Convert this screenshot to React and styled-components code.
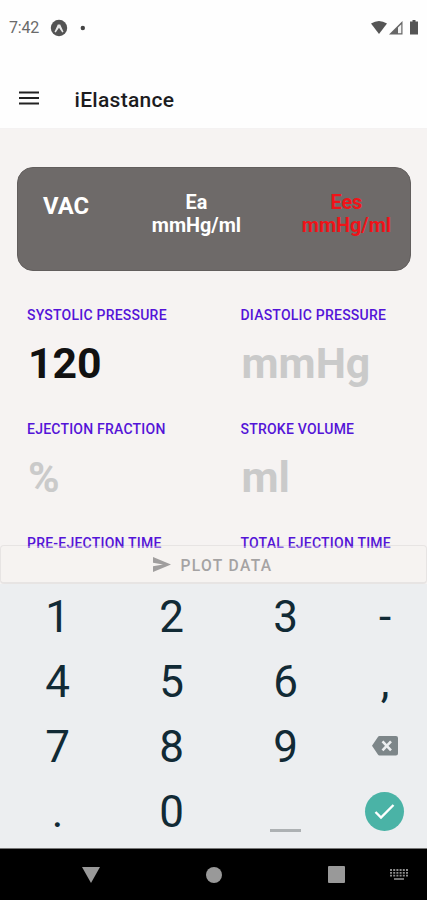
import React from 'react';
import styled, { createGlobalStyle } from 'styled-components';

const GlobalStyle = createGlobalStyle`
  * {
    box-sizing: border-box;
  }
  body {
    margin: 0;
    background: #f6f3f2;
    font-family: Roboto, "Liberation Sans", sans-serif;
  }
`;

const Screen = styled.div`
  display: flex;
  flex-direction: column;
  width: 427px;
  height: 900px;
  overflow: hidden;
  background: #f6f3f2;
`;

const StatusBar = styled.div`
  display: flex;
  justify-content: space-between;
  align-items: center;
  height: 56px;
  padding: 0 7px 0 9px;
  background: #fefefe;
`;

const StatusGroup = styled.div`
  display: flex;
  align-items: center;
`;

const Clock = styled.span`
  width: 41px;
  color: #6a6a6a;
  font-size: 16px;
  line-height: 20px;
  letter-spacing: -.2px;
`;

const Header = styled.header`
  display: flex;
  align-items: center;
  height: 73px;
  padding: 12px 18px 0;
  background: #fefefe;
  border-bottom: 1px solid #f4f2f2;
`;

const Title = styled.h1`
  margin: 3px 0 0 34.5px;
  color: #1c1c1e;
  font-size: 21px;
  font-weight: 500;
  line-height: 24px;
  letter-spacing: .3px;
`;

const Content = styled.main`
  height: 416px;
  padding: 38px 16px 0 17px;
`;

const Summary = styled.section`
  display: flex;
  justify-content: space-between;
  height: 104px;
  padding: 25px 19px 0 25px;
  background: #6e6a69;
  border: 1px solid #625e5d;
  border-radius: 16px;
`;

const Measure = styled.div`
  color: ${({ color }) => color || '#ffffff'};
  font-size: ${({ fontSize }) => fontSize || '19.8px'};
  font-weight: 700;
  line-height: 23px;
  text-align: center;
  margin-top: ${({ marginTop }) => marginTop || '-2px'};
  padding-right: ${({ gutter }) => gutter || '0'};
`;

const Form = styled.section`
  display: grid;
  grid-template-columns: 213.5px 1fr;
  grid-auto-rows: 114px;
  padding: 36px 0 0 10px;
`;

const Label = styled.label`
  display: block;
  color: #5414d8;
  font-size: 14px;
  font-weight: 500;
  line-height: 16px;
  letter-spacing: .22px;
  white-space: nowrap;
`;

const Value = styled.div`
  margin: 15px 0 0 1px;
  color: ${({ filled }) => (filled ? '#111111' : '#cacaca')};
  font-size: 42.8px;
  font-weight: 700;
  line-height: 50px;
`;

const PlotButton = styled.button`
  display: flex;
  flex-shrink: 0;
  justify-content: center;
  align-items: center;
  position: relative;
  height: 39px;
  padding: 1px 2px 0 0;
  color: #a5a3a3;
  font-family: inherit;
  font-size: 15.6px;
  font-weight: 500;
  letter-spacing: 1.35px;
  background: rgba(246, 243, 242, .35);
  background-clip: padding-box;
  border: solid rgba(60, 50, 50, .08);
  border-width: 1px 1px 2px;
  border-radius: 4px;
`;

const PlotText = styled.span`
  margin: 2px 0 0 10px;
`;

const Keypad = styled.div`
  display: grid;
  grid-template-columns: 114px 114px 114px 85px;
  grid-auto-rows: 65px;
  height: 265px;
  background: #eceef0;
  border-bottom: 1px solid #777777;
`;

const Key = styled.div`
  display: flex;
  justify-content: center;
  align-items: center;
  padding: ${({ icon }) => (icon ? '0' : '2px 0 0 1px')};
  color: #112a35;
  font-size: 44px;
  line-height: 63px;
`;

const Space = styled.span`
  width: 31px;
  height: 3px;
  margin-top: 37px;
  background: #adb1b3;
`;

const Done = styled.span`
  display: flex;
  justify-content: center;
  align-items: center;
  width: 39px;
  height: 39px;
  background: #4ab3a6;
  border-radius: 50%;
`;

const NavBar = styled.nav`
  display: flex;
  align-items: center;
  flex: 1;
  background: #000000;
`;

const NavItem = styled.span`
  display: flex;
  margin-left: ${({ offset }) => offset};
`;

const fields = [
  { label: 'SYSTOLIC PRESSURE', value: '120', filled: true },
  { label: 'DIASTOLIC PRESSURE', value: 'mmHg' },
  { label: 'EJECTION FRACTION', value: '%' },
  { label: 'STROKE VOLUME', value: 'ml' },
  { label: 'PRE-EJECTION TIME' },
  { label: 'TOTAL EJECTION TIME' },
];

const Backspace = () => (
  <svg width="26" height="22" viewBox="0 0 26 22">
    <path d="M7.500 0H24a2 2 0 0 1 2 2v15.500a2 2 0 0 1-2 2H7.500a2 2 0 0 1-1.600-.9L0 9.800 5.900.9A2 2 0 0 1 7.500 0z" fill="#7d8689" />
    <path d="M10.500 5.300l8.500 9M19 5.300l-8.500 9" stroke="#eceef0" strokeWidth="2.600" />
  </svg>
);

const Check = () => (
  <svg width="21" height="17" viewBox="0 0 21 17">
    <path d="M1.500 9l5.500 5.500L19.500 2" fill="none" stroke="#ffffff" strokeWidth="2.400" />
  </svg>
);

const keys = [
  '1', '2', '3', '-',
  '4', '5', '6', ',',
  '7', '8', '9', <Backspace />,
  '.', '0', <Space />, <Done><Check /></Done>,
];

const App = () => (
  <>
    <GlobalStyle />
    <Screen>
      <StatusBar>
        <StatusGroup>
          <Clock>7:42</Clock>
          <svg width="36" height="18" viewBox="0 0 36 18">
            <circle cx="9" cy="9" r="8.200" fill="#535353" />
            <path d="M4.500 12.800L7.800 5.600h2.400l3.300 7.200-1.200.8L9 8.800l-3.300 4.800z" fill="#e8e8e8" />
            <circle cx="32.800" cy="9" r="2.200" fill="#444444" />
          </svg>
        </StatusGroup>
        <svg width="50" height="16" viewBox="0 0 50 16">
          <path d="M1 3.600Q9-1.600 17 3.600L9 14z" fill="#555555" />
          <path d="M19 14.500L32.500 1v13.500z" fill="#666666" />
          <path d="M28 7.500L31.300 4.200v9.100H28z" fill="#f4f4f4" />
          <path d="M40 1.500h2.500V0h3v1.500H48v13h-8V1.500z" fill="#555555" />
        </svg>
      </StatusBar>
      <Header>
        <svg width="22" height="16" viewBox="0 0 22 16">
          <path d="M1 2.500h20M1 8h20M1 13.500h20" stroke="#222222" strokeWidth="2" />
        </svg>
        <Title>iElastance</Title>
      </Header>
      <Content>
        <Summary>
          <Measure fontSize="23.800px" marginTop="2px" gutter="2px">VAC</Measure>
          <Measure>Ea<br />mmHg/ml</Measure>
          <Measure color="#f01318">Ees<br />mmHg/ml</Measure>
        </Summary>
        <Form>
          {fields.map(({ label, value, filled }) => (
            <div key={label}>
              <Label>{label}</Label>
              {value && <Value filled={filled ? 1 : undefined}>{value}</Value>}
            </div>
          ))}
        </Form>
      </Content>
      {/* The button is translucent, the last labels show through it */}
      <PlotButton>
        <svg width="18" height="15" viewBox="0 0 18 15">
          <path d="M0 0l18 7.500L0 15V9.200l10-1.700L0 5.800z" fill="#a09e9e" />
        </svg>
        <PlotText>PLOT DATA</PlotText>
      </PlotButton>
      <Keypad>
        {keys.map((key, i) => (
          <Key key={i} icon={typeof key === 'string' ? undefined : 1}>{key}</Key>
        ))}
      </Keypad>
      <NavBar>
        <NavItem offset="81.500px">
          <svg width="18" height="16" viewBox="0 0 18 16"><path d="M0 0h18L9 16z" fill="#999999" /></svg>
        </NavItem>
        <NavItem offset="106.500px">
          <svg width="16" height="16" viewBox="0 0 16 16"><circle cx="8" cy="8" r="8" fill="#999999" /></svg>
        </NavItem>
        <NavItem offset="106px">
          <svg width="17" height="17" viewBox="0 0 17 17"><rect width="17" height="17" rx="1" fill="#999999" /></svg>
        </NavItem>
        <NavItem offset="45px">
          <svg width="18" height="11" viewBox="0 0 18 11">
            <path d="M0 1h18M0 3.800h18M0 6.600h18" stroke="#8c8c8c" strokeWidth="1.800" strokeDasharray="2 1.200" />
            <path d="M4 10h10" stroke="#999999" strokeWidth="1.500" />
          </svg>
        </NavItem>
      </NavBar>
    </Screen>
  </>
);

export default App;
